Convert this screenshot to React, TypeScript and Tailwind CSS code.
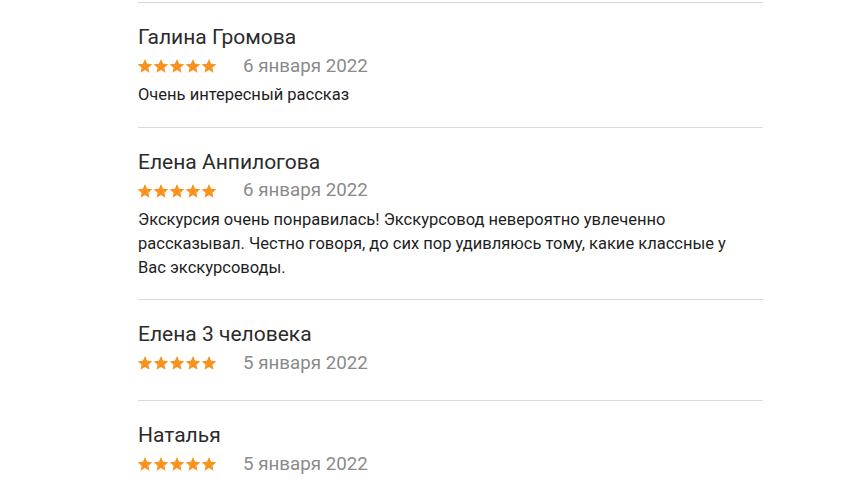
import React from "react";

type Review = { name: string; date: string; body?: React.ReactNode };

const reviews: Review[] = [
  { name: "Галина Громова", date: "6 января 2022", body: <>Очень интересный рассказ</> },
  {
    name: "Елена Анпилогова",
    date: "6 января 2022",
    body: (
      <>
        Экскурсия очень понравилась! Экскурсовод невероятно увлеченно
        <br />
        рассказывал. Честно говоря, до сих пор удивляюсь тому, какие классные у
        <br />
        Вас экскурсоводы.
      </>
    ),
  },
  { name: "Елена 3 человека", date: "5 января 2022" },
  { name: "Наталья", date: "5 января 2022" },
];

function Star() {
  return (
    <svg width="16" height="16" viewBox="0 0 24 24" className="shrink-0">
      <path
        d="M12 1.5l3.1 7.3 7.9.6-6 5.2 1.9 7.7L12 18.1l-6.9 4.2 1.9-7.7-6-5.2 7.9-.6z"
        fill="#f7931e"
      />
    </svg>
  );
}

export default function App() {
  return (
    <div
      className="w-[847px] h-[499px] overflow-hidden bg-white"
      style={{ fontFamily: "Roboto, 'Liberation Sans', sans-serif" }}
    >
      <div className="ml-[138px] w-[625px] pt-[2px]">
        {reviews.map((r, i) => (
          <div
            key={i}
            className={
              "border-t border-[#d9d9d9] pt-[21px] " + (r.body ? "pb-[19.5px]" : "pb-[25px]")
            }
          >
            <div className="text-[21px] leading-[26px] text-[#2b2b2b]">{r.name}</div>
            <div className="mt-[4px] flex items-center h-[24px]">
              <div className="flex w-[80px] -ml-[1px]">
                <Star />
                <Star />
                <Star />
                <Star />
                <Star />
              </div>
              <span className="ml-[26px] text-[18.75px] text-[#8a8a8a]">{r.date}</span>
            </div>
            {r.body && (
              <div className="mt-[5px] text-[16.5px] leading-[24px] text-[#1e1e1e]">{r.body}</div>
            )}
          </div>
        ))}
      </div>
    </div>
  );
}
